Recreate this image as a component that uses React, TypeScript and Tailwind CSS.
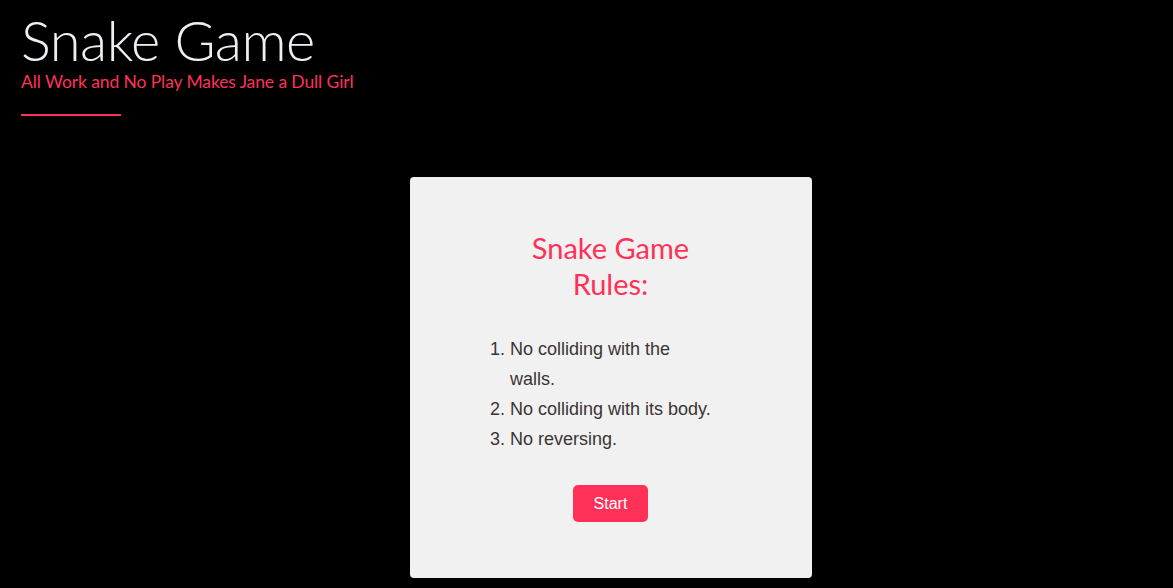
import React from "react";

export default function App() {
  return (
    <div className="min-h-[588px] w-full bg-black">
      <header className="pl-[21px] pt-[9px]">
        <h1 className="text-[56px] leading-[62px] font-light text-[#f1eef3] font-['Lato','Open_Sans',sans-serif] tracking-[-0.5px]">
          Snake Game
        </h1>
        <p className="text-[17.5px] leading-[22px] tracking-[-0.1px] text-[#ff3158] font-['Lato','Open_Sans',sans-serif]">
          All Work and No Play Makes Jane a Dull Girl
        </p>
        <div className="mt-[21px] h-[2px] w-[100px] bg-[#ff3158]" />
      </header>
      <main className="flex justify-center pl-[48px] pt-[61px]">
        <div className="flex h-[401px] w-[402px] flex-col items-center rounded-[4px] bg-[#f1f1f1] pt-[53px]">
          <h2 className="text-center text-[29px] leading-[36px] text-[#ff3158] font-['Lato','Open_Sans',sans-serif]">
            Snake Game
            <br />
            Rules:
          </h2>
          <ol className="mt-[32px] mr-[17px] w-[226px] list-decimal pl-[21px] text-[18px] leading-[30px] text-[#3b3431] font-['Liberation_Sans',Arial,sans-serif]">
            <li>No colliding with the walls.</li>
            <li>No colliding with its body.</li>
            <li>No reversing.</li>
          </ol>
          <button className="mt-[31px] h-[37px] w-[75px] rounded-[5px] bg-[#ff3158] text-[16px] text-white font-['Liberation_Sans',Arial,sans-serif]">
            Start
          </button>
        </div>
      </main>
    </div>
  );
}
